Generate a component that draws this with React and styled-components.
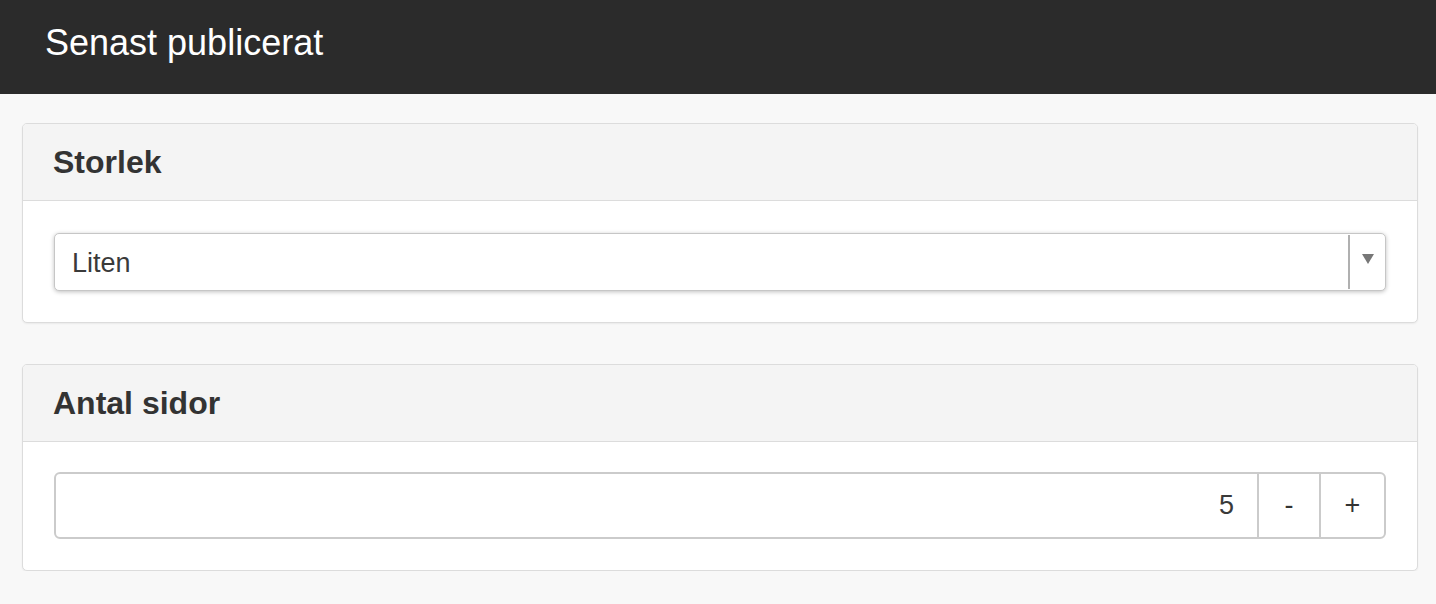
import React from 'react';
import styled, { createGlobalStyle } from 'styled-components';

const GlobalStyle = createGlobalStyle`
  html, body {
    margin: 0;
    padding: 0;
    background: #f8f8f8;
    font-family: "Liberation Sans", Arial, sans-serif;
    color: #333;
  }
`;

const TopBar = styled.header`
  height: 94px;
  background: #2b2b2b;
  display: flex;
  align-items: center;
  padding: 0 45px;
  box-sizing: border-box;

  h1 {
    margin: 0;
    font-size: 36px;
    font-weight: normal;
    color: #fff;
    position: relative;
    top: -4px;
  }
`;

const Content = styled.main`
  padding: 29px 18px 0 22px;
  display: flex;
  flex-direction: column;
  gap: 41px;
`;

const Panel = styled.section`
  background: #fff;
  border: 1px solid #dcdcdc;
  border-radius: 5px;
  box-shadow: 0 1px 2px rgba(0, 0, 0, 0.06);
  overflow: hidden;
`;

const PanelHeader = styled.div`
  height: 76px;
  background: #f4f4f4;
  border-bottom: 1px solid #dcdcdc;
  display: flex;
  align-items: center;
  padding: 0 30px;

  h2 {
    margin: 0;
    font-size: 32px;
    font-weight: bold;
    color: #333;
  }
`;

const PanelBody = styled.div`
  padding: ${(p) => p.$top}px 31px 31px;
`;

const Select = styled.div`
  height: 56px;
  border: 1px solid #c6c6c6;
  border-radius: 5px;
  box-shadow: 0 1px 4px rgba(0, 0, 0, 0.25);
  display: flex;
  align-items: stretch;
  background: #fff;
`;

const SelectValue = styled.div`
  flex: 1;
  display: flex;
  align-items: center;
  padding: 3px 17px 0;
  font-size: 27px;
  color: #3a3a3a;
`;

const SelectArrow = styled.div`
  width: 35px;
  margin: 1px 0;
  border-left: 2px solid #b0b0b0;
  display: flex;
  align-items: center;
  justify-content: center;

  &::after {
    content: '';
    border-left: 6px solid transparent;
    border-right: 6px solid transparent;
    border-top: 10px solid #777;
    margin-top: -6px;
  }
`;

const Stepper = styled.div`
  box-sizing: border-box;
  height: 67px;
  border: 2px solid #cbcbcb;
  border-radius: 6px;
  display: flex;
  background: #fff;
`;

const StepperValue = styled.div`
  flex: 1;
  display: flex;
  align-items: center;
  justify-content: flex-end;
  padding: 0 23px;
  font-size: 27px;
  color: #3a3a3a;
`;

const StepButton = styled.button`
  width: ${(p) => p.$width}px;
  border: none;
  border-left: 2px solid #cbcbcb;
  background: transparent;
  font-family: inherit;
  font-size: 27px;
  color: #333;
  padding: 0;
  cursor: pointer;
`;

export default function App() {
  return (
    <>
      <GlobalStyle />
      <TopBar>
        <h1>Senast publicerat</h1>
      </TopBar>
      <Content>
        <Panel>
          <PanelHeader>
            <h2>Storlek</h2>
          </PanelHeader>
          <PanelBody $top={32}>
            <Select>
              <SelectValue>Liten</SelectValue>
              <SelectArrow />
            </Select>
          </PanelBody>
        </Panel>
        <Panel>
          <PanelHeader>
            <h2>Antal sidor</h2>
          </PanelHeader>
          <PanelBody $top={30}>
            <Stepper>
              <StepperValue>5</StepperValue>
              <StepButton $width={62}>-</StepButton>
              <StepButton $width={65}>+</StepButton>
            </Stepper>
          </PanelBody>
        </Panel>
      </Content>
    </>
  );
}
